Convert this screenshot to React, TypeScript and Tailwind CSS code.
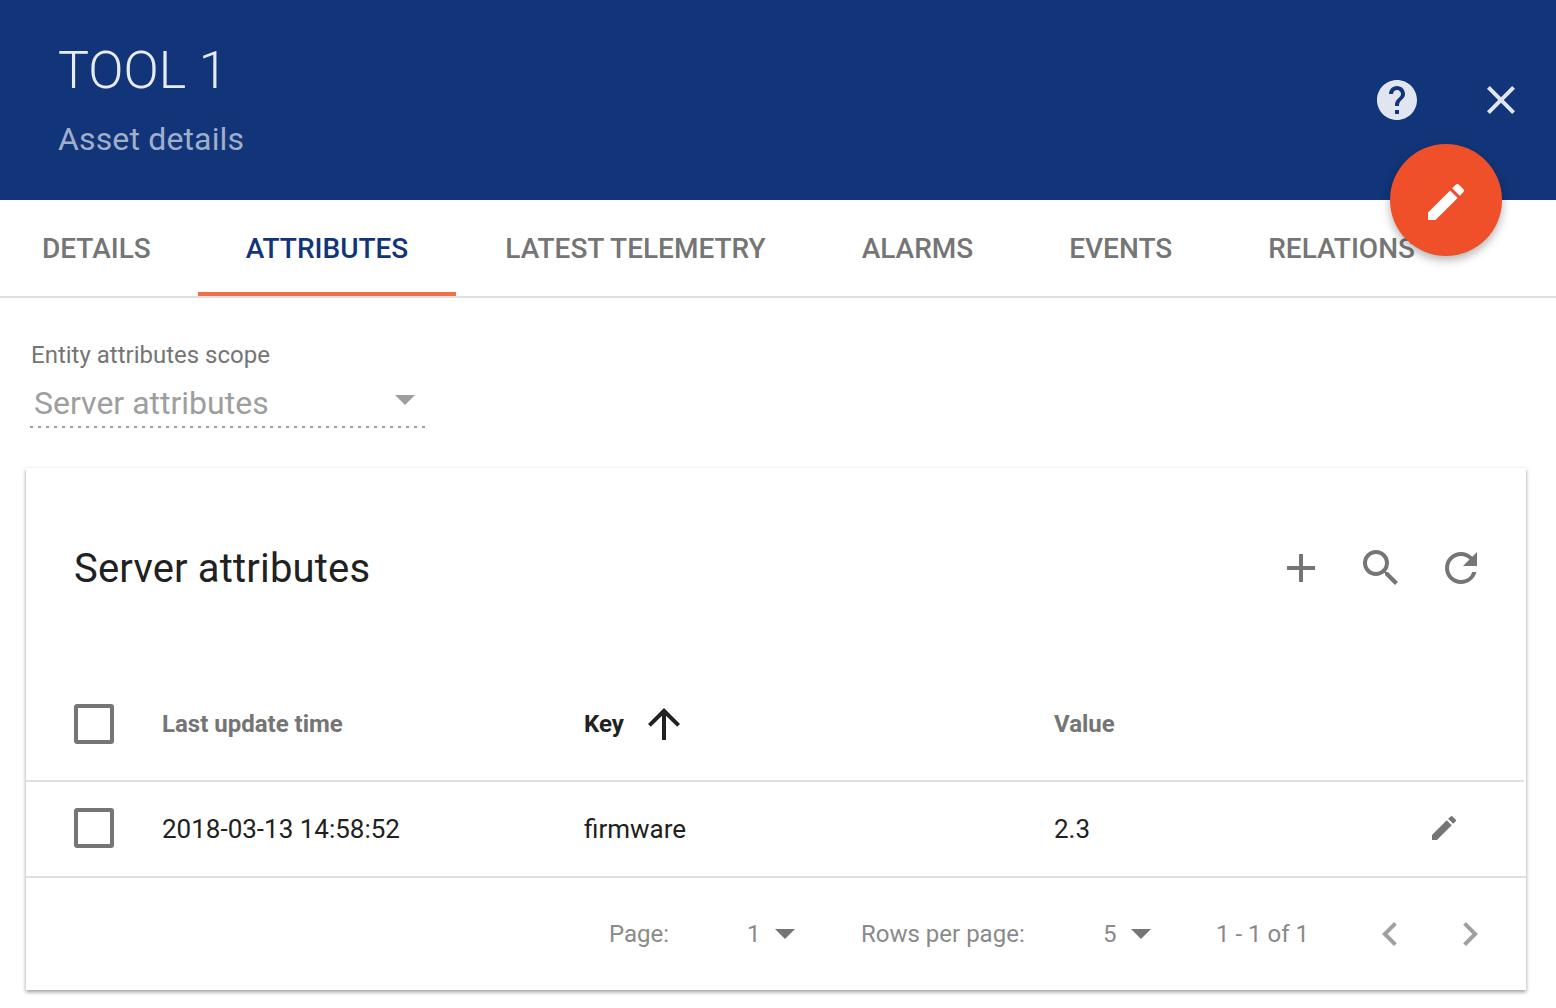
import React from 'react';

const tabs = ['DETAILS', 'ATTRIBUTES', 'LATEST TELEMETRY', 'ALARMS', 'EVENTS', 'RELATIONS'];

const Icon: React.FC<{ d: string; size: number; className?: string }> = ({ d, size, className }) => (
  <svg width={size} height={size} viewBox="0 0 24 24" className={className} fill="currentColor">
    <path d={d} />
  </svg>
);

const PENCIL = 'M3 17.25V21h3.75L17.81 9.94l-3.75-3.75L3 17.25zM20.71 7.04a1 1 0 0 0 0-1.41l-2.34-2.34a1 1 0 0 0-1.41 0l-1.83 1.83 3.75 3.75 1.83-1.83z';
const HELP = 'M12 2C6.48 2 2 6.48 2 12s4.48 10 10 10 10-4.48 10-10S17.52 2 12 2zm1 17h-2v-2h2v2zm2.07-7.75l-.9.92C13.45 12.9 13 13.5 13 15h-2v-.5c0-1.1.45-2.1 1.17-2.83l1.24-1.26c.37-.36.59-.86.59-1.41 0-1.1-.9-2-2-2s-2 .9-2 2H8c0-2.21 1.79-4 4-4s4 1.79 4 4c0 .88-.36 1.68-.93 2.25z';
const CLOSE = 'M19 6.41L17.59 5 12 10.59 6.41 5 5 6.41 10.59 12 5 17.59 6.41 19 12 13.41 17.59 19 19 17.59 13.41 12z';
const PLUS = 'M19 13h-6v6h-2v-6H5v-2h6V5h2v6h6v2z';
const SEARCH = 'M15.5 14h-.79l-.28-.27A6.471 6.471 0 0 0 16 9.5 6.5 6.5 0 1 0 9.5 16c1.61 0 3.09-.59 4.23-1.57l.27.28v.79l5 4.99L20.49 19l-4.99-5zm-6 0C7.01 14 5 11.99 5 9.5S7.01 5 9.5 5 14 7.01 14 9.5 11.99 14 9.5 14z';
const REFRESH = 'M17.65 6.35A7.958 7.958 0 0 0 12 4c-4.42 0-7.99 3.58-7.99 8s3.57 8 7.99 8c3.73 0 6.84-2.55 7.73-6h-2.08A5.99 5.99 0 0 1 12 18c-3.31 0-6-2.69-6-6s2.69-6 6-6c1.66 0 3.14.69 4.22 1.78L13 11h7V4l-2.35 2.35z';
const ARROW_UP = 'M4 12l1.41 1.41L11 7.83V20h2V7.83l5.58 5.59L20 12l-8-8-8 8z';
const PREV = 'M15.41 7.41L14 6l-6 6 6 6 1.41-1.41L10.83 12z';
const NEXT = 'M10 6L8.59 7.41 13.17 12l-4.58 4.59L10 18l6-6z';

const Checkbox: React.FC<{ className?: string }> = ({ className }) => (
  <div className={`w-10 h-10 rounded-[3px] border-[4px] border-[#757575] shrink-0 ${className ?? ''}`} />
);

const Caret: React.FC<{ className?: string }> = ({ className }) => (
  <div className={`w-0 h-0 border-x-[10px] border-x-transparent border-t-[10px] ${className ?? ''}`} />
);

export default function App() {
  return (
    <div className="relative h-[1008px] overflow-hidden bg-white font-['Roboto',sans-serif] text-[#212121]">
      {/* header */}
      <div className="h-[200px] bg-[#123579] flex justify-between pl-[58px] pr-[31px]">
        <div>
          <h1 className="text-[52px] leading-[56px] font-light text-[#e7ebf3] mt-[43px]">TOOL 1</h1>
          <p className="text-[32px] leading-[40px] text-[#a0aecb] mt-[20px] tracking-[0.15px]">Asset details</p>
        </div>
        <div className="flex items-center gap-[56px] h-[200px] text-[#e1e5ef]">
          <Icon d={HELP} size={48} />
          <Icon d={CLOSE} size={48} />
        </div>
      </div>

      {/* fab */}
      <div className="absolute left-[1390px] top-[144px] z-10 w-[112px] h-[112px] rounded-full bg-[#ef5029] text-white flex items-center justify-center shadow-[0_4px_10px_rgba(0,0,0,0.3)]">
        <Icon d={PENCIL} size={48} className="mt-1" />
      </div>

      {/* tabs */}
      <div className="flex h-[98px] border-b-2 border-[#e0e0e0] pl-[42px]">
        {tabs.map((t, i) => (
          <div
            key={t}
            className={`h-[96px] flex items-center text-[28px] font-medium ${
              i === 1
                ? 'text-[#123579] border-b-4 border-[#ee7049] px-[48px] pt-[6px]'
                : `text-[#757575] pt-[2px] ${i === 0 ? 'pr-[47px]' : i === 2 ? 'pl-[49px] pr-[48px]' : 'px-[48px]'}`
            }`}
          >
            {t}
          </div>
        ))}
      </div>

      {/* scope select */}
      <div className="w-[395px] ml-[30px] mt-[42px]">
        <div className="text-[24px] leading-[30px] text-[#757575] pl-px">Entity attributes scope</div>
        <div className="flex items-center justify-between h-[56px] pl-1 pr-[10px] pt-[10px]">
          <span className="text-[32px] leading-[40px] text-[#9e9e9e]">Server attributes</span>
          <Caret className="border-t-[#9e9e9e] mb-[6px]" />
        </div>
        <div className="h-[2px] bg-[repeating-linear-gradient(90deg,#9e9e9e_0_3px,transparent_3px_8px)]" />
      </div>

      {/* card */}
      <div className="ml-[26px] mr-[30px] mt-[40px] h-[522px] bg-white shadow-[0_2px_4px_rgba(0,0,0,0.4)] flex flex-col">
        <div className="h-[200px] flex items-center justify-between pl-[48px] pr-[41px] text-[#757575]">
          <span className="text-[40px] leading-[48px] text-[#212121] tracking-[0.17px] pt-px">Server attributes</span>
          <div className="flex items-center gap-[32px]">
            <Icon d={PLUS} size={48} />
            <Icon d={SEARCH} size={48} />
            <Icon d={REFRESH} size={48} />
          </div>
        </div>

        <div className="h-[114px] flex items-center pl-[48px] mr-[2px] border-b-2 border-[#e0e0e0] text-[24px] font-bold text-[#757575]">
          <Checkbox />
          <span className="w-[422px] ml-[48px]">Last update time</span>
          <span className="flex items-center w-[470px] text-[#212121]">
            Key
            <Icon d={ARROW_UP} size={48} className="ml-4" />
          </span>
          <span>Value</span>
        </div>

        <div className="h-[96px] flex items-center pl-[48px] border-b-2 border-[#e0e0e0] text-[26px]">
          <Checkbox className="-mt-[2px]" />
          <span className="w-[422px] ml-[48px]">2018-03-13 14:58:52</span>
          <span className="w-[470px]">firmware</span>
          <span className="flex-1">2.3</span>
          <Icon d={PENCIL} size={32} className="text-[#757575] mr-[66px] -mt-[2px]" />
        </div>

        <div className="flex-1 flex items-center pl-[583px] text-[24px] text-[#8a8a8a]">
          <span className="w-[138px]">Page:</span>
          <span className="w-[28px]">1</span>
          <Caret className="border-t-[#757575]" />
          <span className="ml-[66px] w-[242px]">Rows per page:</span>
          <span className="w-[28px]">5</span>
          <Caret className="border-t-[#757575]" />
          <span className="ml-[65px] w-[150px]">1 - 1 of 1</span>
          <div className="flex gap-[32px] text-[#a0a0a0]">
            <Icon d={PREV} size={48} />
            <Icon d={NEXT} size={48} />
          </div>
        </div>
      </div>
    </div>
  );
}
